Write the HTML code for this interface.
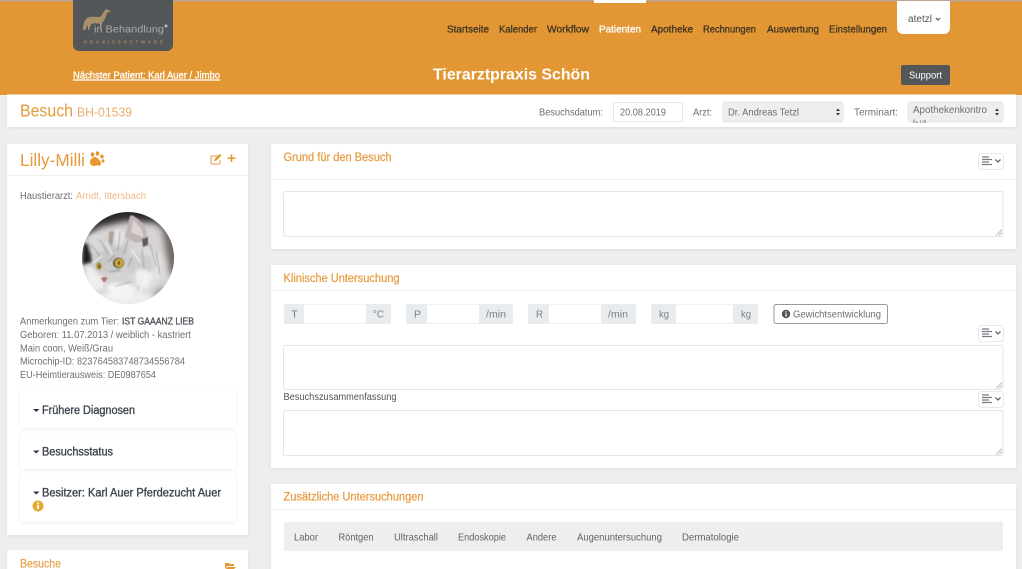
<!DOCTYPE html>
<html lang="de"><head><meta charset="utf-8"><title>Besuch</title>
<style>
html,body{margin:0;padding:0;width:1022px;height:569px;overflow:hidden;background:#eeeeee}
svg{display:block;filter:blur(.35px)}
text{font-family:"Liberation Sans",sans-serif;white-space:pre}
.nav{font-size:10.5px;fill:#3f3420;stroke:#3f3420;stroke-width:.3px}
.lb{font-size:10px;fill:#6b6f75}
.dk{font-size:10px;fill:#50555b}
.ac{font-size:11.5px;fill:#3d4450;stroke:#3d4450;stroke-width:.35px}
.tt{font-size:11.5px;fill:#e8a04a;stroke:#e8a04a;stroke-width:.3px}
.ad{font-size:10.5px;fill:#7b8087}
.tab{font-size:10.5px;fill:#5f6368}
.bd{fill:#fff;stroke:#e6e6e6;stroke-width:1}
.ln{stroke:#eeeeee;stroke-width:1}
</style></head><body>
<svg width="1022" height="569" viewBox="0 0 1022 569" xmlns="http://www.w3.org/2000/svg">
<defs>
<filter id="b0" x="-20%" y="-20%" width="140%" height="140%"><feGaussianBlur stdDeviation=".6"/></filter>
<filter id="b1" x="-20%" y="-20%" width="140%" height="140%"><feGaussianBlur stdDeviation="1.600"/></filter>
<filter id="b2" x="-20%" y="-20%" width="140%" height="140%"><feGaussianBlur stdDeviation="3.500"/></filter>
<filter id="sh" x="-5%" y="-5%" width="110%" height="110%"><feDropShadow dx="0" dy="1" stdDeviation="1.500" flood-color="#000" flood-opacity=".07"/></filter>
<clipPath id="cat"><circle cx="128" cy="258" r="46"/></clipPath>
<clipPath id="sel"><rect x="908" y="102" width="95" height="21"/></clipPath>
<g id="dd">
<rect x=".5" y=".5" width="25" height="16" rx="3" fill="#fff" stroke="#e8e8e8"/>
<path d="M4 4h7M4 6.500h10M4 9h7M4 11.500h10" stroke="#777c84" stroke-width="1.200"/>
<path d="M17.500 6.500l2.500 2.500 2.500-2.500" fill="none" stroke="#666" stroke-width="1.300"/>
</g>
<g id="grip"><path d="M0 6L6 0M3 6L6 3" stroke="#aaa" stroke-width=".8"/></g>
</defs>

<!-- top -->
<rect width="1022" height="95" fill="#e39734"/>
<rect width="1022" height="1.500" fill="#b9a792"/>
<path d="M73 0h100v45a6 6 0 0 1-6 6H79a6 6 0 0 1-6-6z" fill="#54575a"/>
<path d="M83 30c0-5 1-9 4-12 3-2 8-1 13-1 2-2 4-6 6-8l2 1 3 1-4 2c-1 3-2 7-5 10l-1 6-1 1 0-6c-3-1-6-1-9 0l-2 6h-1l0-5-3 5z" fill="#a8906a"/>
<text x="94" y="32.500" font-size="10" fill="#a9aaab" textLength="70" lengthAdjust="spacingAndGlyphs">in Behandlung</text>
<circle cx="166" cy="26" r="1.500" fill="#bbb"/>
<text x="84" y="43.500" font-size="4.500" font-weight="700" fill="#a88c52" textLength="79" lengthAdjust="spacing">PRAXISSOFTWARE</text>

<text class="nav" x="447" y="32.500" textLength="42" lengthAdjust="spacingAndGlyphs">Startseite</text>
<text class="nav" x="499" y="32.500" textLength="38" lengthAdjust="spacingAndGlyphs">Kalender</text>
<text class="nav" x="547" y="32.500" textLength="42" lengthAdjust="spacingAndGlyphs">Workflow</text>
<text class="nav" x="599" y="32.500" textLength="42" lengthAdjust="spacingAndGlyphs" style="fill:#fff;stroke:#fff">Patienten</text>
<text class="nav" x="651" y="32.500" textLength="42" lengthAdjust="spacingAndGlyphs">Apotheke</text>
<text class="nav" x="703" y="32.500" textLength="53" lengthAdjust="spacingAndGlyphs">Rechnungen</text>
<text class="nav" x="767" y="32.500" textLength="52" lengthAdjust="spacingAndGlyphs">Auswertung</text>
<text class="nav" x="829" y="32.500" textLength="58" lengthAdjust="spacingAndGlyphs">Einstellungen</text>
<rect x="594" y="0" width="52" height="3" fill="#fff"/>
<path d="M897 1h53v27a6 6 0 0 1-6 6h-41a6 6 0 0 1-6-6z" fill="#fff"/>
<text x="908" y="22" font-size="10" fill="#555" textLength="24" lengthAdjust="spacingAndGlyphs">atetzl</text>
<path d="M936 18l2 2 2-2" fill="none" stroke="#555" stroke-width="1.200"/>

<text x="73" y="78.500" font-size="10" fill="#fff" stroke="#fff" stroke-width=".3" textLength="147" lengthAdjust="spacingAndGlyphs" text-decoration="underline">Nächster Patient: Karl Auer / Jimbo</text>
<text x="433" y="79.500" font-size="15.500" font-weight="700" fill="#fff" textLength="157" lengthAdjust="spacingAndGlyphs">Tierarztpraxis Schön</text>
<rect x="901" y="65" width="49" height="20" rx="2" fill="#54575a"/>
<text x="909" y="78.500" font-size="10" fill="#fff" textLength="33" lengthAdjust="spacingAndGlyphs">Support</text>

<!-- header bar -->
<rect x="7" y="94.500" width="1009" height="32.500" fill="#fff" filter="url(#sh)"/>
<text x="20" y="116.500" font-size="17.500" fill="#e59a3c" textLength="53" lengthAdjust="spacingAndGlyphs">Besuch</text>
<text x="77" y="116.500" font-size="13" fill="#e9ad6c" textLength="55" lengthAdjust="spacingAndGlyphs">BH-01539</text>
<text class="lb" x="539" y="115.500" textLength="64" lengthAdjust="spacingAndGlyphs">Besuchsdatum:</text>
<rect class="bd" x="613.500" y="102.500" width="69" height="19" rx="2"/>
<text class="lb" x="620" y="115.500" textLength="46" lengthAdjust="spacingAndGlyphs">20.08.2019</text>
<text class="lb" x="693" y="115.500" textLength="19" lengthAdjust="spacingAndGlyphs">Arzt:</text>
<rect x="723" y="102" width="120" height="20" rx="3" fill="#eeeeee" stroke="#e4e4e4"/>
<text class="lb" x="728" y="115.500" textLength="71" lengthAdjust="spacingAndGlyphs">Dr. Andreas Tetzl</text>
<path d="M836 111l2-2.500 2 2.500zM836 113l2 2.500 2-2.500z" fill="#333"/>
<text class="lb" x="854" y="115.500" textLength="44" lengthAdjust="spacingAndGlyphs">Terminart:</text>
<rect x="908" y="102" width="95" height="20" rx="3" fill="#eeeeee" stroke="#e4e4e4"/>
<g clip-path="url(#sel)">
<text class="lb" x="913" y="113" textLength="74" lengthAdjust="spacingAndGlyphs">Apothekenkontro</text>
<text class="lb" x="913" y="127" textLength="14" lengthAdjust="spacingAndGlyphs">lle VA</text>
</g>
<path d="M995 111l2-2.500 2 2.500zM995 113l2 2.500 2-2.500z" fill="#333"/>

<!-- left card -->
<rect x="7" y="144" width="241" height="391" fill="#fff" filter="url(#sh)"/>
<line class="ln" x1="7" x2="248" y1="175.500" y2="175.500"/>
<text x="20" y="166" font-size="17.500" fill="#e59a3c" textLength="65" lengthAdjust="spacingAndGlyphs">Lilly-Milli</text>
<g fill="#e8962e">
<path d="M90 162c0-3 3-5 5-5s5 3 6 6c.5 2-1 3-3 2.500-1-.3-2 0-3 .500-3 .5-5-1.500-5-4z"/>
<ellipse cx="92.500" cy="154.500" rx="1.800" ry="2.300"/><ellipse cx="97.500" cy="153.500" rx="1.800" ry="2.300"/>
<ellipse cx="102" cy="156.500" rx="1.700" ry="2"/><ellipse cx="103" cy="161" rx="1.500" ry="1.800"/>
</g>
<path d="M218 156h-6a1 1 0 0 0-1 1v6a1 1 0 0 0 1 1h7a1 1 0 0 0 1-1v-3" fill="none" stroke="#ecab66" stroke-width="1.200"/>
<path d="M214 161l1-2.500 5-4.500 1.500 1.500-5 5z" fill="#e8962e"/>
<path d="M231.500 154.500v7.500M227.500 158.250h8" stroke="#e8962e" stroke-width="1.600"/>

<text class="lb" x="20" y="199" textLength="53" lengthAdjust="spacingAndGlyphs">Haustierarzt:</text>
<text x="76" y="199" font-size="10" fill="#efb883" textLength="70" lengthAdjust="spacingAndGlyphs">Arndt, Ittersbach</text>

<!-- cat -->
<g clip-path="url(#cat)">
<rect x="80" y="210" width="96" height="96" fill="#d6d4d3"/>
<g filter="url(#b2)">
<path d="M78 205h100v36l-22-18-30-2-26 6-22 14z" fill="#2b282c"/>
<path d="M162 228l20 4v40l-12 4z" fill="#6d6664"/>
<ellipse cx="112" cy="250" rx="16" ry="12" fill="#c8c7c7"/>
<ellipse cx="148" cy="268" rx="16" ry="18" fill="#e4e2e1"/>
<ellipse cx="125" cy="298" rx="28" ry="8" fill="#f1f0ef"/>
<ellipse cx="164" cy="298" rx="10" ry="10" fill="#8d8886"/>
</g>
<g filter="url(#b1)">
<path d="M83 243l6 1 3 18-10 3z" fill="#1f1d1e"/>
<path d="M88 237c5-4 11-5 16-1l2 17-16-3z" fill="#d9d8d8"/>
<path d="M96 254l14-4 16 8-4 14-16 2-12-6z" fill="#c9c8c8"/>
<path d="M86 268c4-2 8 0 10 5l8 6 0 10-10 2-8-8z" fill="#efeeee"/>
<path d="M106 285c8-3 20-3 30 2l-3 10-20 2z" fill="#f4f3f3"/>
<path d="M126 258c8-6 20-6 26 0l2 12-16 6-12-4z" fill="#cfcdcc"/>
<path d="M136 270c6-2 14 0 16 6l-4 14-12-6z" fill="#f0efee"/>
<path d="M115 230c4-1 8 0 10 4l-3 12-8 0z" fill="#e6e5e5"/>
</g>
<g filter="url(#b0)">
<path d="M125 237l5-21c2-2 5 1 8 3l7 7 3 14-12 3z" fill="#c0b5b6"/>
<path d="M131 232l2-12 8 8 3 10z" fill="#ddd4d4"/>
<path d="M142 239l6-2 0 8-5 2z" fill="#5f5856"/>
<path d="M109 232c2-1 4-1 5 0l-2 14-3-3z" fill="#aba198"/>
</g>
<g fill="none" stroke-linecap="round" filter="url(#b0)" opacity=".75">
<path d="M100 240l8 14M92 246l8 10M120 232l-2 18M128 240l-4 14M150 244l6 22M156 252l4 22M142 250l2 18" stroke="#a3a1a1" stroke-width="1.200"/>
<path d="M106 242l6 12M94 262l8-6M132 250l8 12M146 276l-6 16M114 292l14-6" stroke="#fbfafa" stroke-width="1.400"/>
<path d="M108 262l6-6M128 266l4-8M110 272l10-2M116 286l14-4" stroke="#8c8a8b" stroke-width=".9"/>
</g>
<g filter="url(#b0)">
<ellipse cx="118.500" cy="263" rx="5.500" ry="5.200" fill="#4a4238"/>
<circle cx="119" cy="263" r="4.400" fill="#cda63c"/>
<ellipse cx="119" cy="263" rx="1" ry="2" fill="#4a3b20"/>
<ellipse cx="99" cy="266" rx="2.800" ry="3.800" fill="#a99240"/>
<ellipse cx="99.500" cy="266.500" rx=".9" ry="1.500" fill="#4a3b20"/>
<path d="M101 278.500c2-1.500 5-1.500 6.500-.5l-2 3-1.500 1.500z" fill="#a9706a"/>
</g>
</g>

<text class="lb" x="20" y="324.500" textLength="99" lengthAdjust="spacingAndGlyphs">Anmerkungen zum Tier:</text>
<text x="122" y="324.500" font-size="10" fill="#4c5058" stroke="#4c5058" stroke-width=".3" textLength="72" lengthAdjust="spacingAndGlyphs">IST GAAANZ LIEB</text>
<text class="lb" x="20" y="338" textLength="171" lengthAdjust="spacingAndGlyphs">Geboren: 11.07.2013 / weiblich - kastriert</text>
<text class="lb" x="20" y="351.500" textLength="93" lengthAdjust="spacingAndGlyphs">Main coon, Weiß/Grau</text>
<text class="lb" x="20" y="364.500" textLength="165" lengthAdjust="spacingAndGlyphs">Microchip-ID: 823764583748734556784</text>
<text class="lb" x="20" y="378" textLength="136" lengthAdjust="spacingAndGlyphs">EU-Heimtierausweis: DE0987654</text>

<g fill="#fff" filter="url(#sh)">
<rect x="20" y="391" width="216" height="37"/>
<rect x="20" y="433" width="216" height="36"/>
<rect x="20" y="474" width="216" height="48"/>
</g>
<g fill="#2f3540"><path d="M33 409h6.500l-3.250 3z"/><path d="M33 450.500h6.500l-3.250 3z"/><path d="M33 491.500h6.500l-3.250 3z"/></g>
<text class="ac" x="42" y="414" textLength="93" lengthAdjust="spacingAndGlyphs">Frühere Diagnosen</text>
<text class="ac" x="42" y="455.500" textLength="71" lengthAdjust="spacingAndGlyphs">Besuchsstatus</text>
<text class="ac" x="42" y="496.500" textLength="179" lengthAdjust="spacingAndGlyphs">Besitzer: Karl Auer Pferdezucht Auer</text>
<circle cx="38" cy="506" r="5.500" fill="#e3aa2f"/>
<rect x="37.200" y="505" width="1.700" height="4" fill="#fff"/><rect x="37.200" y="502.500" width="1.700" height="1.700" fill="#fff"/>

<rect x="7" y="550" width="241" height="19" fill="#fff" filter="url(#sh)"/>
<text x="20" y="567.500" font-size="12" fill="#e8a04a" stroke="#e8a04a" stroke-width=".2" textLength="41" lengthAdjust="spacingAndGlyphs">Besuche</text>
<path d="M225 569v-6h4l1 1h4v2h-7l-2 3zM227 567h9l-2 2h-8z" fill="#e8962e"/>

<!-- right card 1 -->
<rect x="271" y="144" width="745" height="105" fill="#fff" filter="url(#sh)"/>
<line class="ln" x1="271" x2="1016" y1="179.500" y2="179.500"/>
<text class="tt" x="283.500" y="161" textLength="108" lengthAdjust="spacingAndGlyphs">Grund für den Besuch</text>
<use href="#dd" x="978" y="153"/>
<rect class="bd" x="283.500" y="191.500" width="719.500" height="45" rx="2"/>
<use href="#grip" x="996" y="229.500"/>

<!-- right card 2 -->
<rect x="271" y="265" width="745" height="203" fill="#fff" filter="url(#sh)"/>
<line class="ln" x1="271" x2="1016" y1="290.500" y2="290.500"/>
<text class="tt" x="283.500" y="282" textLength="116" lengthAdjust="spacingAndGlyphs">Klinische Untersuchung</text>

<g fill="#e9ecef">
<rect x="284" y="304" width="107" height="20" rx="2"/>
<rect x="406" y="304" width="107" height="20" rx="2"/>
<rect x="528" y="304" width="108" height="20" rx="2"/>
<rect x="651" y="304" width="107" height="20" rx="2"/>
</g>
<g fill="#fff">
<rect x="304" y="304.700" width="62" height="18.600"/>
<rect x="427" y="304.700" width="52" height="18.600"/>
<rect x="549" y="304.700" width="52" height="18.600"/>
<rect x="676" y="304.700" width="57" height="18.600"/>
</g>
<text class="ad" x="291" y="317.500" textLength="7" lengthAdjust="spacingAndGlyphs">T</text>
<text class="ad" x="373" y="317.500" textLength="11" lengthAdjust="spacingAndGlyphs">°C</text>
<text class="ad" x="414" y="317.500" textLength="7" lengthAdjust="spacingAndGlyphs">P</text>
<text class="ad" x="486" y="317.500" textLength="20" lengthAdjust="spacingAndGlyphs">/min</text>
<text class="ad" x="536" y="317.500" textLength="7" lengthAdjust="spacingAndGlyphs">R</text>
<text class="ad" x="608" y="317.500" textLength="20" lengthAdjust="spacingAndGlyphs">/min</text>
<text class="ad" x="659" y="317.500" textLength="10" lengthAdjust="spacingAndGlyphs">kg</text>
<text class="ad" x="741" y="317.500" textLength="10" lengthAdjust="spacingAndGlyphs">kg</text>
<rect x="774" y="304.500" width="113.500" height="19" rx="2" fill="#fff" stroke="#999"/>
<circle cx="786" cy="314" r="4.200" fill="#555"/>
<rect x="785.400" y="313.500" width="1.300" height="3" fill="#fff"/><rect x="785.400" y="311.300" width="1.300" height="1.300" fill="#fff"/>
<text class="lb" x="793" y="317.500" textLength="88" lengthAdjust="spacingAndGlyphs" style="font-size:10.500px">Gewichtsentwicklung</text>

<use href="#dd" x="978" y="325"/>
<rect class="bd" x="283.500" y="345.500" width="719.500" height="44" rx="2"/>
<use href="#grip" x="996" y="382.500"/>
<text class="dk" x="283.500" y="400" textLength="113" lengthAdjust="spacingAndGlyphs">Besuchszusammenfassung</text>
<use href="#dd" x="978" y="391"/>
<rect class="bd" x="283.500" y="410.500" width="719.500" height="45" rx="2"/>
<use href="#grip" x="996" y="448.500"/>

<!-- right card 3 -->
<rect x="271" y="484" width="745" height="85" fill="#fff" filter="url(#sh)"/>
<line class="ln" x1="271" x2="1016" y1="509.500" y2="509.500"/>
<text class="tt" x="283.500" y="500.500" textLength="140" lengthAdjust="spacingAndGlyphs">Zusätzliche Untersuchungen</text>
<rect x="284" y="522" width="719" height="29" fill="#eeeeee"/>
<text class="tab" x="294" y="540.500" textLength="24" lengthAdjust="spacingAndGlyphs">Labor</text>
<text class="tab" x="338.500" y="540.500" textLength="35" lengthAdjust="spacingAndGlyphs">Röntgen</text>
<text class="tab" x="394" y="540.500" textLength="44" lengthAdjust="spacingAndGlyphs">Ultraschall</text>
<text class="tab" x="458" y="540.500" textLength="48" lengthAdjust="spacingAndGlyphs">Endoskopie</text>
<text class="tab" x="526.500" y="540.500" textLength="30" lengthAdjust="spacingAndGlyphs">Andere</text>
<text class="tab" x="577" y="540.500" textLength="85" lengthAdjust="spacingAndGlyphs">Augenuntersuchung</text>
<text class="tab" x="682" y="540.500" textLength="57" lengthAdjust="spacingAndGlyphs">Dermatologie</text>
</svg>
</body></html>
